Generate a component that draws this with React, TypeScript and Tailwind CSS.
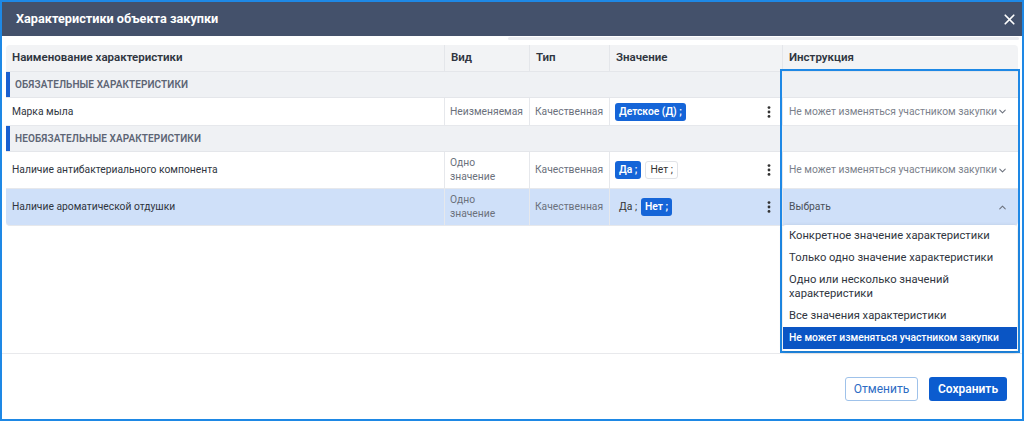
import { X, ChevronDown, ChevronUp } from 'lucide-react';

const font = { fontFamily: 'Roboto, "Noto Sans", sans-serif' };

function Kebab() {
  return (
    <svg width="4" height="12" viewBox="0 0 4 12" className="text-[#333]">
      <circle cx="2" cy="1.6" r="1.4" fill="currentColor" />
      <circle cx="2" cy="6" r="1.4" fill="currentColor" />
      <circle cx="2" cy="10.4" r="1.4" fill="currentColor" />
    </svg>
  );
}

function Chip({ label, active }: { label: string; active?: boolean }) {
  if (active) {
    return (
      <span className="inline-flex h-[18px] items-center rounded-[3px] bg-[#1565d8] px-[4px] text-[10.3px] font-semibold text-white">
        {label}
      </span>
    );
  }
  return (
    <span className="inline-flex h-[18px] items-center rounded-[3px] border border-[#e1e3e7] bg-white px-[4px] text-[10.3px] text-[#333]">
      {label}
    </span>
  );
}

function Section({ title }: { title: string }) {
  return (
    <div className="grid h-[26px] grid-cols-[777px_234px] border-b border-[#e4e6ea] bg-[#eff1f4]">
      <div className="flex items-center">
        <div className="h-full w-[4px] bg-[#1a5fd0]" />
        <span className="pl-[5px] text-[10px] font-semibold uppercase tracking-[0.1px] text-[#5d6575]">{title}</span>
      </div>
      <div />
    </div>
  );
}

type RowProps = {
  name: string;
  kind: React.ReactNode;
  chips: React.ReactNode;
  instr: string;
  open?: boolean;
  tall?: boolean;
};

function Row({ name, kind, chips, instr, open, tall }: RowProps) {
  const bg = open ? 'bg-[#cfe0f9]' : 'bg-white';
  const cell = 'flex items-center border-r border-[#e6e8ec]';
  return (
    <div
      className={`grid ${tall ? 'h-[37px]' : 'h-[28px]'} grid-cols-[439px_85px_80px_173px_234px] border-b border-[#e6e8ec] text-[10.3px] ${bg} ${open ? 'rounded-b-[4px]' : ''}`}
    >
      <div className={`${cell} pl-[6px] text-[#2f3540]`}>{name}</div>
      <div className={`${cell} pl-[5px] leading-[14px] text-[#6b717c]`}>{kind}</div>
      <div className={`${cell} pl-[5px] text-[#6b717c]`}>Качественная</div>
      <div className={`${cell} justify-between pl-[5px] pr-[11px]`}>
        <div className="flex items-center gap-[4px]">{chips}</div>
        <Kebab />
      </div>
      <div className="flex items-center justify-between whitespace-nowrap pl-[6px] pr-[9px]">
        <span className={open ? 'text-[#4a505a]' : 'text-[#7b818b]'}>{instr}</span>
        {open ? (
          <ChevronUp size={11} strokeWidth={2.2} className="text-[#6b717c]" />
        ) : (
          <ChevronDown size={11} strokeWidth={2.2} className="text-[#6b717c]" />
        )}
      </div>
    </div>
  );
}

const options = [
  'Конкретное значение характеристики',
  'Только одно значение характеристики',
  'Одно или несколько значений характеристики',
  'Все значения характеристики',
  'Не может изменяться участником закупки',
];

export default function App() {
  return (
    <div
      className="relative flex h-[421px] w-[1024px] flex-col overflow-hidden border-2 border-[#1e88e5] bg-white"
      style={font}
    >
      <div className="flex h-[34px] shrink-0 items-center justify-between bg-[#44516b] pl-[14px] pr-[4px]">
        <span className="text-[12.7px] font-bold text-white">Характеристики объекта закупки</span>
        <X size={17} strokeWidth={2.4} className="text-white" />
      </div>

      <div className="h-[9px] shrink-0 pl-[506px] pr-[3px] pt-[1px]">
        <div className="h-[3px] rounded-[2px] bg-[#eceef1]" />
      </div>

      <div className="mx-[4px] flex flex-1 flex-col">
        <div className="grid h-[27px] grid-cols-[439px_85px_80px_173px_234px] rounded-t-[4px] border-b border-[#e4e6ea] bg-[#f2f3f5] text-[11.5px] font-semibold text-[#2f3540]">
          <div className="flex items-center border-r border-[#e4e6ea] pl-[6px]">Наименование характеристики</div>
          <div className="flex items-center border-r border-[#e4e6ea] pl-[6px]">Вид</div>
          <div className="flex items-center border-r border-[#e4e6ea] pl-[6px]">Тип</div>
          <div className="flex items-center border-r border-[#e4e6ea] pl-[6px]">Значение</div>
          <div className="flex items-center pl-[6px]">Инструкция</div>
        </div>

        <Section title="Обязательные характеристики" />
        <Row
          name="Марка мыла"
          kind="Неизменяемая"
          chips={<Chip label="Детское (Д) ;" active />}
          instr="Не может изменяться участником закупки"
        />
        <Section title="Необязательные характеристики" />
        <Row
          tall
          name="Наличие антибактериального компонента"
          kind={<span>Одно<br />значение</span>}
          chips={
            <>
              <Chip label="Да ;" active />
              <Chip label="Нет ;" />
            </>
          }
          instr="Не может изменяться участником закупки"
        />
        <Row
          tall
          open
          name="Наличие ароматической отдушки"
          kind={<span>Одно<br />значение</span>}
          chips={
            <>
              <span className="pl-[4px] text-[10.3px] text-[#333]">Да ;</span>
              <Chip label="Нет ;" active />
            </>
          }
          instr="Выбрать"
        />
      </div>

      <div className="flex h-[66px] shrink-0 items-start justify-end gap-[11px] border-t border-[#e8e9ec] pr-[15px] pt-[23px]">
        <button className="h-[24px] w-[73px] rounded-[3px] border border-[#9fc2ea] bg-white text-[12px] text-[#2b6cc4]">
          Отменить
        </button>
        <button className="h-[24px] w-[78px] rounded-[3px] bg-[#0b5ccf] text-[12px] font-semibold text-white">
          Сохранить
        </button>
      </div>

      <div className="absolute left-[778px] top-[67px] h-[284px] w-[240px] border-2 border-[#1e88e5]" />

      <div className="absolute left-[781px] top-[223px] w-[234px] rounded-[3px] bg-white pb-[2px] shadow-[0_1px_4px_rgba(0,0,0,0.15)]">
        {options.map((o, i) => (
          <div
            key={o}
            className={`whitespace-nowrap px-[6px] py-[4px] leading-[14px] ${
              i === options.length - 1 ? 'bg-[#0a55c4] text-[10.3px] font-medium text-white' : 'text-[11.2px] text-[#2f3540]'
            }`}
          >
            {i === 2 ? (
              <>
                Одно или несколько значений
                <br />
                характеристики
              </>
            ) : (
              o
            )}
          </div>
        ))}
      </div>
    </div>
  );
}
